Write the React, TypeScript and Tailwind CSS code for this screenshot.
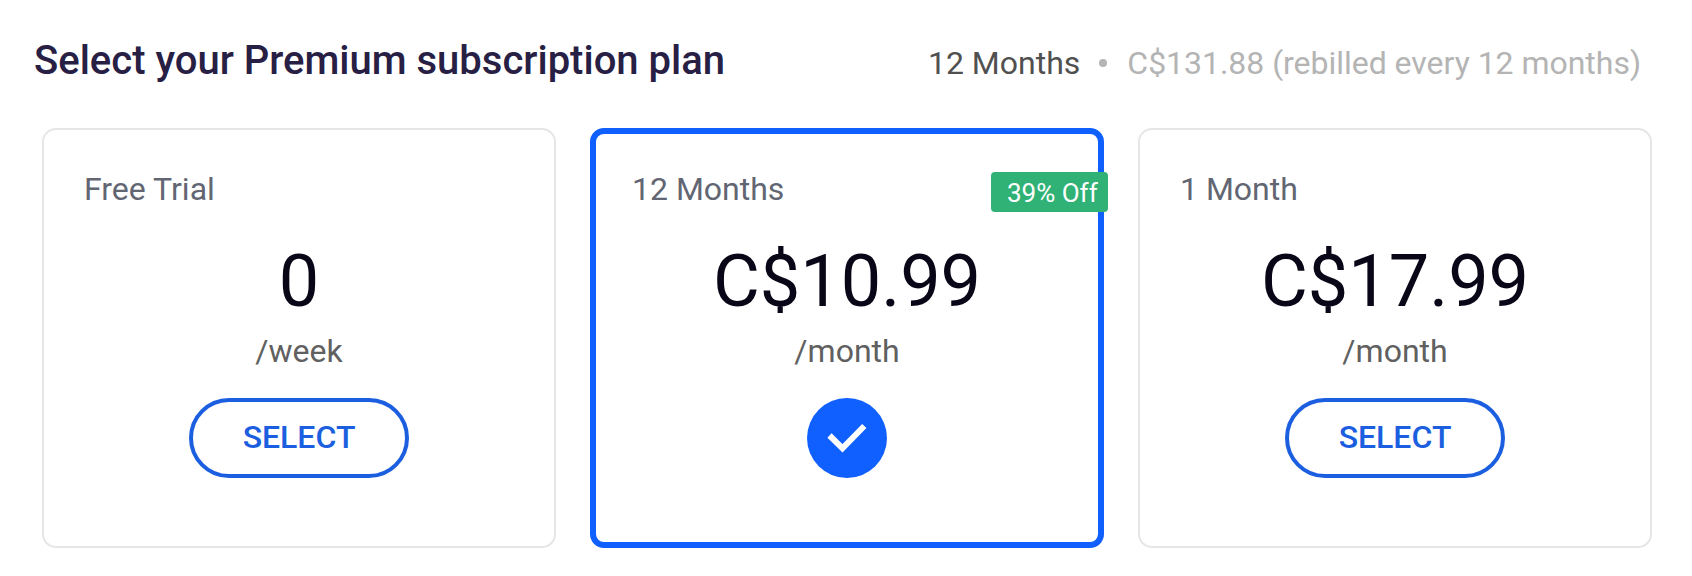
import React, { useState } from "react";

const plans = [
  { id: "trial", name: "Free Trial", price: "0", period: "/week" },
  {
    id: "yearly",
    name: "12 Months",
    price: "C$10.99",
    period: "/month",
    badge: "39% Off",
    billing: "C$131.88 (rebilled every 12 months)",
  },
  { id: "monthly", name: "1 Month", price: "C$17.99", period: "/month" },
];

const CheckMark = () => (
  <div className="flex h-20 w-20 items-center justify-center rounded-full bg-[#1060ff]">
    <svg width="80" height="80" viewBox="0 0 80 80" fill="none">
      <path
        d="M22.5 37.5L35.5 50.3L57.3 28"
        stroke="#ffffff"
        strokeWidth="6"
      />
    </svg>
  </div>
);

const App = () => {
  const [selected, setSelected] = useState("yearly");
  const current = plans.find((plan) => plan.id === selected);

  return (
    <div className="min-h-[576px] w-[1692px] bg-white pt-[37px] font-['Roboto',sans-serif]">
      <div className="flex items-baseline justify-between pl-[34px] pr-[51px]">
        <h1 className="text-[40px] leading-12 font-medium text-[#272044]">
          Select your Premium subscription plan
        </h1>
        <div className="flex items-center text-[32px] leading-10">
          <span className="text-[#505050]">{current?.name}</span>
          <span className="mr-5 ml-[19px] h-2 w-2 rounded-full bg-[#b4b4b4]" />
          <span className="tracking-[-0.03px] text-[#b4b4b4]">
            {current?.billing}
          </span>
        </div>
      </div>

      <div className="mt-[43px] grid grid-cols-3 gap-[34px] pr-10 pl-[42px]">
        {plans.map((plan) => {
          const active = plan.id === selected;
          return (
            <div
              key={plan.id}
              className={
                active
                  ? "relative h-[420px] rounded-[14px] border-6 border-[#1060ff] px-9 pt-[35px]"
                  : "relative h-[420px] rounded-[14px] border-2 border-[#e6e6e6] px-10 pt-[39px]"
              }
            >
              <h2 className="text-[32px] leading-10 text-[#626673]">
                {plan.name}
              </h2>
              {plan.badge && (
                <span className="absolute top-[38px] -right-[10px] h-10 w-[117px] rounded-[4px] bg-[#30b276] pl-4 text-[26px] leading-[42px] whitespace-nowrap text-white">
                  {plan.badge}
                </span>
              )}
              <div className="mt-[33px] flex flex-col items-center">
                <span className="text-[72px] leading-20 text-[#090717]">
                  {plan.price}
                </span>
                <span className="mt-[9px] mb-[27px] text-[32px] leading-10 text-[#606060]">
                  {plan.period}
                </span>
                {active ? (
                  <CheckMark />
                ) : (
                  <button
                    onClick={() => setSelected(plan.id)}
                    className="h-20 w-[220px] rounded-full border-4 border-[#1b5fe0] pb-[3px] text-[32px] leading-10 font-medium text-[#1b5fe0]"
                  >
                    SELECT
                  </button>
                )}
              </div>
            </div>
          );
        })}
      </div>
    </div>
  );
};

export default App;
